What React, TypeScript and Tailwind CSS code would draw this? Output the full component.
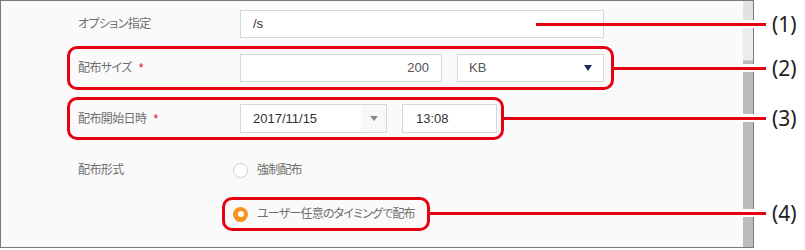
import React from 'react';

const font = "font-['Liberation_Sans','Noto_Sans_CJK_JP',sans-serif] [font-feature-settings:'palt']";

function Label({ text, required }: { text: string; required?: boolean }) {
  return (
    <div className="w-[162px] shrink-0 text-[12px] tracking-[-0.6px] text-[#6e6e6e]">
      {text}
      {required && <span className="ml-[7px] text-[#e60012]">*</span>}
    </div>
  );
}

function Radio({ checked, text }: { checked?: boolean; text: string }) {
  return (
    <div className="flex h-[20px] items-center">
      {checked ? (
        <div className="flex h-[15px] w-[15px] items-center justify-center rounded-full bg-[#f7931e]">
          <div className="h-[6px] w-[6px] rounded-full bg-white" />
        </div>
      ) : (
        <div className="h-[15px] w-[15px] rounded-full border-[1.5px] border-[#c9ced1] bg-white" />
      )}
      <span className="ml-[9px] text-[12px] tracking-[-0.8px] text-[#6e6e6e]">{text}</span>
    </div>
  );
}

const callouts = [
  { n: '(1)', y: 24, x: 536 },
  { n: '(2)', y: 68, x: 614 },
  { n: '(3)', y: 118, x: 503 },
  { n: '(4)', y: 213, x: 430 },
];

export default function App() {
  return (
    <div className={`relative flex h-[250px] w-[805px] bg-white ${font}`}>
      {/* スクリーンショット枠 */}
      <div className="relative flex h-[248px] w-[754px] border border-[#7a7a7a] bg-[#fafafa]">
        <div className="flex-1 pl-[77px] pt-[9px]">
          <div className="flex h-[28px] items-center">
            <Label text="オプション指定" />
            <div className="flex h-[28px] w-[364px] items-center border border-[#d3d8db] bg-white pl-[12px] text-[13px] text-[#333]">
              /s
            </div>
          </div>

          <div className="mt-[16px] flex h-[28px] items-center">
            <Label text="配布サイズ" required />
            <div className="flex h-[28px] w-[202px] items-center justify-end border border-[#d3d8db] bg-white pr-[12px] text-[13px] text-[#555]">
              200
            </div>
            <div className="ml-[15px] flex h-[28px] w-[147px] items-center justify-between border border-[#d3d8db] bg-white pl-[11px] pr-[11px] text-[13px] text-[#555]">
              <span>KB</span>
              <svg width="8" height="6" viewBox="0 0 8 6">
                <path d="M0 0h8L4 6z" fill="#1c2a5c" />
              </svg>
            </div>
          </div>

          <div className="mt-[22px] flex h-[29px] items-center">
            <Label text="配布開始日時" required />
            <div className="flex h-[29px] w-[147px] items-stretch border border-[#d3d8db] bg-white text-[13px] text-[#333]">
              <div className="flex flex-1 items-center pl-[12px]">2017/11/15</div>
              <div className="flex w-[25px] items-center justify-center bg-[#f8f8f8]">
                <svg width="8" height="5" viewBox="0 0 8 5">
                  <path d="M0 0h8L4 5z" fill="#8a8a8a" />
                </svg>
              </div>
            </div>
            <div className="ml-[15px] flex h-[29px] w-[95px] items-center border border-[#d3d8db] bg-white pl-[13px] text-[13px] text-[#333]">
              13:08
            </div>
          </div>

          <div className="mt-[27px] flex h-[20px] items-center">
            <div className="w-[155px] shrink-0 text-[12px] tracking-[-0.6px] text-[#6e6e6e]">配布形式</div>
            <Radio text="強制配布" />
          </div>

          <div className="mt-[24px] pl-[155px]">
            <Radio checked text="ユーザー任意のタイミングで配布" />
          </div>
        </div>

        {/* スクロールバー */}
        <div className="flex w-[10px] flex-col bg-[#ececec]">
          <div className="h-[27px] border-b border-[#d6d6d6] bg-[#e2e2e2]" />
          <div className="h-[32px]" />
          <div className="flex-1 border-t border-[#d0d0d0] bg-[#bcbcbc]" />
        </div>

        {/* 赤枠 */}
        <div className="absolute left-[66px] top-[45px] h-[44px] w-[547px] rounded-[10px] border-[3px] border-[#e60012]" />
        <div className="absolute left-[66px] top-[96px] h-[43px] w-[437px] rounded-[10px] border-[3px] border-[#e60012]" />
        <div className="absolute left-[221px] top-[196px] h-[34px] w-[208px] rounded-[10px] border-[3px] border-[#e60012]" />
      </div>

      {/* 引き出し線と番号 */}
      {callouts.map((c) => (
        <React.Fragment key={c.n}>
          <div
            className="absolute left-[742px] h-[8px] w-[12px] bg-white"
            style={{ top: c.y - 4 }}
          />
          <div
            className="absolute h-[3px] bg-[#e60012]"
            style={{ left: c.x, top: c.y - 1, width: 766 - c.x }}
          />
          <div
            className="absolute left-[772px] text-[21px] leading-[26px] text-[#222] font-['Noto_Sans',sans-serif]"
            style={{ top: c.y - 13 }}
          >
            {c.n}
          </div>
        </React.Fragment>
      ))}
    </div>
  );
}
